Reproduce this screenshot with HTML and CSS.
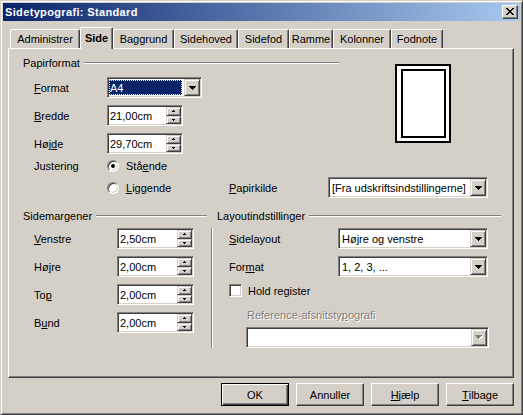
FILE: index.html
```html
<!DOCTYPE html>
<html lang="da">
<head>
<meta charset="utf-8">
<title>Sidetypografi: Standard</title>
<link rel="stylesheet" href="styles.css">
</head>
<body>
<div class="window">
  <div class="titlebar">
    <span class="title">Sidetypografi: Standard</span>
    <span class="close"><svg width="8" height="7" viewBox="0 0 8 7"><path d="M0 0h2v1h-2z M6 0h2v1h-2z M1 1h2v1h-2z M5 1h2v1h-2z M2 2h4v1h-4z M3 3h2v1h-2z M2 4h4v1h-4z M1 5h2v1h-2z M5 5h2v1h-2z M0 6h2v1h-2z M6 6h2v1h-2z" fill="#000"/></svg></span>
  </div>

  <div class="tabs">
    <div class="tab t1">Administrer</div>
    <div class="tab sel t2">Side</div>
    <div class="tab t3">Baggrund</div>
    <div class="tab t4">Sidehoved</div>
    <div class="tab t5">Sidefod</div>
    <div class="tab t6">Ramme</div>
    <div class="tab t7">Kolonner</div>
    <div class="tab t8">Fodnote</div>
  </div>

  <div class="panel">
    <div class="top">
      <div class="paper">
        <div class="ghead"><span>Papirformat</span><i class="etch"></i></div>
        <div class="row first">
          <span class="lbl"><u>F</u>ormat</span>
          <div class="field combo w-a4">
            <div class="value focus"><span>A4</span></div>
            <div class="drop"><svg width="7" height="4" viewBox="0 0 7 4"><path d="M0 0h7v1h-1v1h-1v1h-1v1h-1v-1h-1v-1h-1v-1h-1z" fill="#000"/></svg></div>
          </div>
        </div>
        <div class="row">
          <span class="lbl"><u>B</u>redde</span>
          <div class="field spin w-spin1">
            <div class="value">21,00cm</div>
            <div class="spinbtns">
              <div class="sb"><svg width="3" height="2" viewBox="0 0 3 2"><path d="M1 0h1v1h1v1h-3v-1h1z" fill="#000"/></svg></div>
              <div class="sb"><svg width="3" height="2" viewBox="0 0 3 2"><path d="M0 0h3v1h-1v1h-1v-1h-1z" fill="#000"/></svg></div>
            </div>
          </div>
        </div>
        <div class="row">
          <span class="lbl">Høj<u>d</u>e</span>
          <div class="field spin w-spin1">
            <div class="value">29,70cm</div>
            <div class="spinbtns">
              <div class="sb"><svg width="3" height="2" viewBox="0 0 3 2"><path d="M1 0h1v1h1v1h-3v-1h1z" fill="#000"/></svg></div>
              <div class="sb"><svg width="3" height="2" viewBox="0 0 3 2"><path d="M0 0h3v1h-1v1h-1v-1h-1z" fill="#000"/></svg></div>
            </div>
          </div>
        </div>
        <div class="row radiorow">
          <span class="lbl">Justering</span>
          <span class="radio on"></span><span>Stå<u>e</u>nde</span>
        </div>
      </div>
      <div class="preview"><div class="page"></div></div>
    </div>

    <div class="row ligrow">
      <span class="lbl"></span>
      <span class="radiogrp"><span class="radio"></span><span><u>L</u>iggende</span></span>
      <span class="lbl-src"><u>P</u>apirkilde</span>
      <div class="field combo w-src">
        <div class="value"><span>[Fra udskriftsindstillingerne]</span></div>
        <div class="drop"><svg width="7" height="4" viewBox="0 0 7 4"><path d="M0 0h7v1h-1v1h-1v1h-1v1h-1v-1h-1v-1h-1v-1h-1z" fill="#000"/></svg></div>
      </div>
    </div>

    <div class="bottom">
      <div class="margins">
        <div class="ghead"><span>Sidemargener</span><i class="etch"></i></div>
        <div class="row mrow first">
          <span class="lbl2"><u>V</u>enstre</span>
          <div class="field spin w-spin2">
            <div class="value">2,50cm</div>
            <div class="spinbtns">
              <div class="sb"><svg width="3" height="2" viewBox="0 0 3 2"><path d="M1 0h1v1h1v1h-3v-1h1z" fill="#000"/></svg></div>
              <div class="sb"><svg width="3" height="2" viewBox="0 0 3 2"><path d="M0 0h3v1h-1v1h-1v-1h-1z" fill="#000"/></svg></div>
            </div>
          </div>
        </div>
        <div class="row mrow">
          <span class="lbl2">Hø<u>j</u>re</span>
          <div class="field spin w-spin2">
            <div class="value">2,00cm</div>
            <div class="spinbtns">
              <div class="sb"><svg width="3" height="2" viewBox="0 0 3 2"><path d="M1 0h1v1h1v1h-3v-1h1z" fill="#000"/></svg></div>
              <div class="sb"><svg width="3" height="2" viewBox="0 0 3 2"><path d="M0 0h3v1h-1v1h-1v-1h-1z" fill="#000"/></svg></div>
            </div>
          </div>
        </div>
        <div class="row mrow">
          <span class="lbl2">To<u>p</u></span>
          <div class="field spin w-spin2">
            <div class="value">2,00cm</div>
            <div class="spinbtns">
              <div class="sb"><svg width="3" height="2" viewBox="0 0 3 2"><path d="M1 0h1v1h1v1h-3v-1h1z" fill="#000"/></svg></div>
              <div class="sb"><svg width="3" height="2" viewBox="0 0 3 2"><path d="M0 0h3v1h-1v1h-1v-1h-1z" fill="#000"/></svg></div>
            </div>
          </div>
        </div>
        <div class="row mrow">
          <span class="lbl2">B<u>u</u>nd</span>
          <div class="field spin w-spin2">
            <div class="value">2,00cm</div>
            <div class="spinbtns">
              <div class="sb"><svg width="3" height="2" viewBox="0 0 3 2"><path d="M1 0h1v1h1v1h-3v-1h1z" fill="#000"/></svg></div>
              <div class="sb"><svg width="3" height="2" viewBox="0 0 3 2"><path d="M0 0h3v1h-1v1h-1v-1h-1z" fill="#000"/></svg></div>
            </div>
          </div>
        </div>
      </div>

      <div class="layout">
        <div class="ghead"><span>Layoutindstillinger</span><i class="etch"></i></div>
        <div class="lbody">
          <i class="vline"></i>
          <div class="lcontent">
            <div class="row">
              <span class="lbl3"><u>S</u>idelayout</span>
              <div class="field combo w-lay">
                <div class="value"><span>Højre og venstre</span></div>
                <div class="drop"><svg width="7" height="4" viewBox="0 0 7 4"><path d="M0 0h7v1h-1v1h-1v1h-1v1h-1v-1h-1v-1h-1v-1h-1z" fill="#000"/></svg></div>
              </div>
            </div>
            <div class="row mrow">
              <span class="lbl3">For<u>m</u>at</span>
              <div class="field combo w-lay">
                <div class="value"><span>1, 2, 3, ...</span></div>
                <div class="drop"><svg width="7" height="4" viewBox="0 0 7 4"><path d="M0 0h7v1h-1v1h-1v1h-1v1h-1v-1h-1v-1h-1v-1h-1z" fill="#000"/></svg></div>
              </div>
            </div>
            <div class="checkrow">
              <span class="check"></span><span>Hold re<u>g</u>ister</span>
            </div>
            <div class="reflabel">Reference-afsnitsty<u>p</u>ografi</div>
            <div class="field combo w-ref disabled">
              <div class="value"></div>
              <div class="drop"><svg width="8" height="5" viewBox="0 0 8 5"><path d="M1 1h7v1h-1v1h-1v1h-1v1h-1v-1h-1v-1h-1v-1h-1z" fill="#fff"/><path d="M0 0h7v1h-1v1h-1v1h-1v1h-1v-1h-1v-1h-1v-1h-1z" fill="#808080"/></svg></div>
            </div>
          </div>
        </div>
      </div>
    </div>
  </div>

  <div class="buttons">
    <div class="btn default">OK</div>
    <div class="btn">Annuller</div>
    <div class="btn"><u>H</u>jælp</div>
    <div class="btn"><u>T</u>ilbage</div>
  </div>
</div>
</body>
</html>
```

FILE: styles.css
```css
* { box-sizing: border-box; }

html, body {
  margin: 0;
  padding: 0;
  background: #d4d0c8;
  overflow: hidden;
}

body {
  font-family: "Liberation Sans", Arial, sans-serif;
  font-size: 11px;
  color: #000;
}

u { text-decoration: underline; text-underline-offset: 1px; }

.window {
  width: 523px;
  height: 415px;
  background: #d4d0c8;
  border: 1px solid;
  border-color: #d4d0c8 #404040 #404040 #d4d0c8;
  padding: 2px;
  box-shadow: inset 1px 1px #fff, inset -1px -1px #808080;
  display: flex;
  flex-direction: column;
}

/* title bar */
.titlebar {
  height: 18px;
  flex: none;
  display: flex;
  align-items: center;
  justify-content: space-between;
  padding: 0 2px 0 2px;
  background: linear-gradient(to right, #0a246a, #a6caf0);
}
.title {
  color: #fff;
  font-weight: bold;
  font-size: 11px;
  line-height: 14px;
  letter-spacing: 0.35px;
  white-space: nowrap;
}
.close {
  width: 16px;
  height: 14px;
  background: #d4d0c8;
  border: 1px solid;
  border-color: #fff #404040 #404040 #fff;
  box-shadow: inset -1px -1px #808080;
  display: flex;
  align-items: center;
  justify-content: center;
  padding: 0 1px 1px 0;
}
.close svg { display: block; }

/* tabs */
.tabs {
  margin-top: 6px;
  height: 21px;
  flex: none;
  display: flex;
  align-items: flex-end;
  padding-left: 7px;
}
.tab {
  height: 19px;
  border-top: 1px solid #fff;
  border-left: 1px solid #fff;
  border-right: 1px solid #404040;
  border-radius: 2px 2px 0 0;
  box-shadow: inset -1px 0 #808080;
  display: flex;
  align-items: center;
  justify-content: center;
  white-space: nowrap;
  padding-bottom: 1px;
}
.tab.sel {
  height: 22px;
  margin-bottom: -1px;
  font-weight: bold;
  background: #d4d0c8;
  position: relative;
  z-index: 1;
  padding-bottom: 2px;
}
.t1 { width: 70px; }
.t2 { width: 33px; }
.t3 { width: 61px; }
.t4 { width: 64px; }
.t5 { width: 51px; }
.t6 { width: 44px; }
.t7 { width: 58px; }
.t8 { width: 52px; }

/* panel */
.panel {
  height: 330px;
  flex: none;
  margin: 0 6px 0 5px;
  border: 1px solid;
  border-color: #fff #404040 #404040 #fff;
  box-shadow: inset -1px -1px #808080;
  padding: 7px 0 0 14px;
}

.top { display: flex; align-items: flex-start; }
.paper { width: 316px; }

.ghead {
  height: 14px;
  display: flex;
  align-items: center;
  gap: 4px;
  white-space: nowrap;
}
.etch {
  flex: 1;
  height: 2px;
  border-top: 1px solid #808080;
  border-bottom: 1px solid #fff;
}

.row {
  height: 21px;
  display: flex;
  align-items: center;
  margin-top: 7px;
  white-space: nowrap;
}
.lbl { width: 84px; padding-left: 11px; flex: none; }
.lbl2 { width: 94px; padding-left: 11px; flex: none; }
.lbl3 { width: 109px; flex: none; }

.radiorow { height: 14px; margin-top: 5px; }
.ligrow { margin-top: 4px; }
.radiogrp { width: 122px; display: flex; align-items: center; flex: none; }
.lbl-src { width: 99px; flex: none; }

.radio {
  width: 12px;
  height: 12px;
  flex: none;
  border-radius: 50%;
  background: #fff;
  border: 1px solid;
  border-color: #808080 #fff #fff #808080;
  box-shadow: inset 1px 1px #404040, inset -1px -1px #d4d0c8;
  margin-right: 7px;
  display: flex;
  align-items: center;
  justify-content: center;
}
.radio.on::after {
  content: "";
  width: 4px;
  height: 4px;
  border-radius: 50%;
  background: #000;
}

/* fields */
.field {
  height: 21px;
  flex: none;
  background: #fff;
  border: 1px solid;
  border-color: #808080 #fff #fff #808080;
  box-shadow: inset 1px 1px #404040, inset -1px -1px #d4d0c8;
  padding: 1px;
  display: flex;
}
.field .value {
  flex: 1;
  min-width: 0;
  display: flex;
  align-items: center;
  white-space: nowrap;
  overflow: hidden;
  padding-left: 1px;
}
.combo .value { padding: 1px 2px 1px 1px; }
.combo .value span { padding-left: 1px; }
.value.focus {
  padding: 0;
  margin: 1px 2px 1px 0;
}
.value.focus span {
  display: flex;
  align-items: center;
  width: 100%;
  height: 100%;
  background: #0a246a;
  color: #fff;
  outline: 1px dotted #f0f0b0;
  outline-offset: -1px;
  padding-left: 1px;
}

.drop {
  width: 16px;
  flex: none;
  background: #d4d0c8;
  border: 1px solid;
  border-color: #d4d0c8 #404040 #404040 #d4d0c8;
  box-shadow: inset 1px 1px #fff, inset -1px -1px #808080;
  display: flex;
  align-items: center;
  justify-content: center;
}
.drop svg { display: block; }

.spinbtns {
  width: 15px;
  flex: none;
  display: flex;
  flex-direction: column;
}
.sb {
  flex: 1;
  background: #d4d0c8;
  border: 1px solid;
  border-color: #d4d0c8 #404040 #404040 #d4d0c8;
  box-shadow: inset 1px 1px #fff, inset -1px -1px #808080;
  display: flex;
  align-items: center;
  justify-content: center;
}
.sb svg { display: block; }

.w-a4 { width: 95px; }
.w-spin1 { width: 76px; }
.w-spin2 { width: 77px; }
.w-src { width: 160px; }
.w-lay { width: 150px; }
.w-ref { width: 243px; margin-left: 17px; margin-top: 5px; }

/* preview */
.preview {
  width: 56px;
  height: 79px;
  margin: 8px 0 0 56px;
  border: 2px solid #000;
  background: #fff;
  padding: 3px 0 0 4px;
  flex: none;
}
.page {
  width: 45px;
  height: 69px;
  border: 2px solid #000;
}

/* bottom section */
.bottom {
  display: flex;
  margin-top: 11px;
}
.margins { width: 184px; flex: none; margin-right: 10px; }
.margins .row.first { margin-top: 5px; }
.mrow { margin-top: 7px; }

.layout { width: 284px; flex: none; }
.lbody {
  display: flex;
  margin: 5px 0 0 -6px;
}
.vline {
  width: 2px;
  height: 120px;
  border-left: 1px solid #808080;
  border-right: 1px solid #fff;
  flex: none;
}
.lcontent {
  margin-left: 16px;
  width: 260px;
}
.lcontent > .row:first-child { margin-top: 0; }

.checkrow {
  margin-top: 7px;
  height: 13px;
  display: flex;
  align-items: center;
  white-space: nowrap;
}
.check {
  width: 13px;
  height: 13px;
  flex: none;
  background: #fff;
  border: 1px solid;
  border-color: #808080 #fff #fff #808080;
  box-shadow: inset 1px 1px #404040, inset -1px -1px #d4d0c8;
  margin-right: 6px;
}
.reflabel {
  margin-top: 11px;
  height: 14px;
  line-height: 14px;
  padding-left: 18px;
  color: #808080;
  text-shadow: 1px 1px #fff;
  white-space: nowrap;
}

/* buttons */
.buttons {
  display: flex;
  justify-content: flex-end;
  gap: 7px;
  margin: 5px 6px 0 0;
}
.btn {
  width: 68px;
  height: 23px;
  border: 1px solid;
  border-color: #fff #404040 #404040 #fff;
  box-shadow: inset -1px -1px #808080, inset 1px 1px #d4d0c8;
  display: flex;
  align-items: center;
  justify-content: center;
  white-space: nowrap;
}
.btn.default {
  border: 1px solid #000;
  box-shadow: inset 1px 1px #fff, inset -1px -1px #404040, inset -2px -2px #808080;
}
```
